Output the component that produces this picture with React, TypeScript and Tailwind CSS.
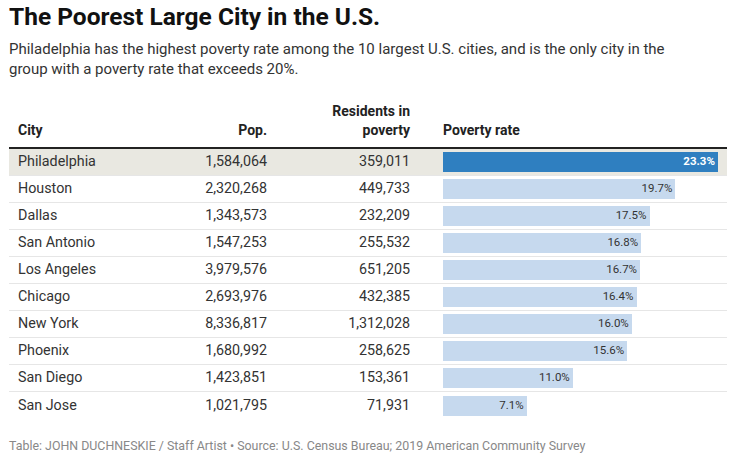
import React from "react";

const rows = [
  { city: "Philadelphia", pop: "1,584,064", res: "359,011", rate: 23.3 },
  { city: "Houston", pop: "2,320,268", res: "449,733", rate: 19.7 },
  { city: "Dallas", pop: "1,343,573", res: "232,209", rate: 17.5 },
  { city: "San Antonio", pop: "1,547,253", res: "255,532", rate: 16.8 },
  { city: "Los Angeles", pop: "3,979,576", res: "651,205", rate: 16.7 },
  { city: "Chicago", pop: "2,693,976", res: "432,385", rate: 16.4 },
  { city: "New York", pop: "8,336,817", res: "1,312,028", rate: 16.0 },
  { city: "Phoenix", pop: "1,680,992", res: "258,625", rate: 15.6 },
  { city: "San Diego", pop: "1,423,851", res: "153,361", rate: 11.0 },
  { city: "San Jose", pop: "1,021,795", res: "71,931", rate: 7.1 },
];

export default function App() {
  return (
    <div
      className="w-[735px] h-[464px] bg-white text-[#222] overflow-hidden"
      style={{ fontFamily: "Roboto, 'Liberation Sans', sans-serif" }}
    >
      <div className="pl-[9px] pt-[2px]">
        <h1 className="text-[24.5px] leading-[29px] font-bold text-[#111]">
          The Poorest Large City in the U.S.
        </h1>
        <p className="mt-[8px] text-[15px] leading-[20px] text-[#333] w-[690px]">
          Philadelphia has the highest poverty rate among the 10 largest U.S. cities, and is the only city in the{" "}
          <br />
          group with a poverty rate that exceeds 20%.
        </p>
      </div>

      <div className="ml-[9px] w-[718px] mt-[23px]">
        <div className="flex items-end pl-[9px] pb-[7px] border-b-2 border-[#222] text-[14px] leading-[19px] font-bold text-[#222]">
          <div className="w-[150px]">City</div>
          <div className="w-[99px] text-right">Pop.</div>
          <div className="w-[143px] text-right">
            Residents in
            <br />
            poverty
          </div>
          <div className="ml-[33px]">Poverty rate</div>
        </div>
        {rows.map((r, i) => (
          <div
            key={r.city}
            className={
              "flex items-center h-[27px] pl-[9px] text-[14.3px] text-[#333] " +
              (i === 0 ? "bg-[#e9e8e1] " : "") +
              (i < rows.length - 1 ? "border-b border-[#e6e6e6]" : "")
            }
          >
            <div className="w-[150px]">{r.city}</div>
            <div className="w-[99px] text-right">{r.pop}</div>
            <div className="w-[143px] text-right">{r.res}</div>
            <div className="ml-[33px] flex-1 flex items-center">
              <div
                className={
                  "h-[20px] flex items-center justify-end pr-[3px] text-[11.5px] " +
                  (i === 0 ? "bg-[#2f7fc0] text-white font-bold" : "bg-[#c6d9ee] text-[#333]")
                }
                style={{ width: `${r.rate * 11.8}px` }}
              >
                {r.rate.toFixed(1)}%
              </div>
            </div>
          </div>
        ))}
      </div>

      <div className="pl-[9px] mt-[19px] text-[12.4px] leading-[16px] text-[#888]">
        Table: JOHN DUCHNESKIE / Staff Artist • Source: U.S. Census Bureau; 2019 American Community Survey
      </div>
    </div>
  );
}
